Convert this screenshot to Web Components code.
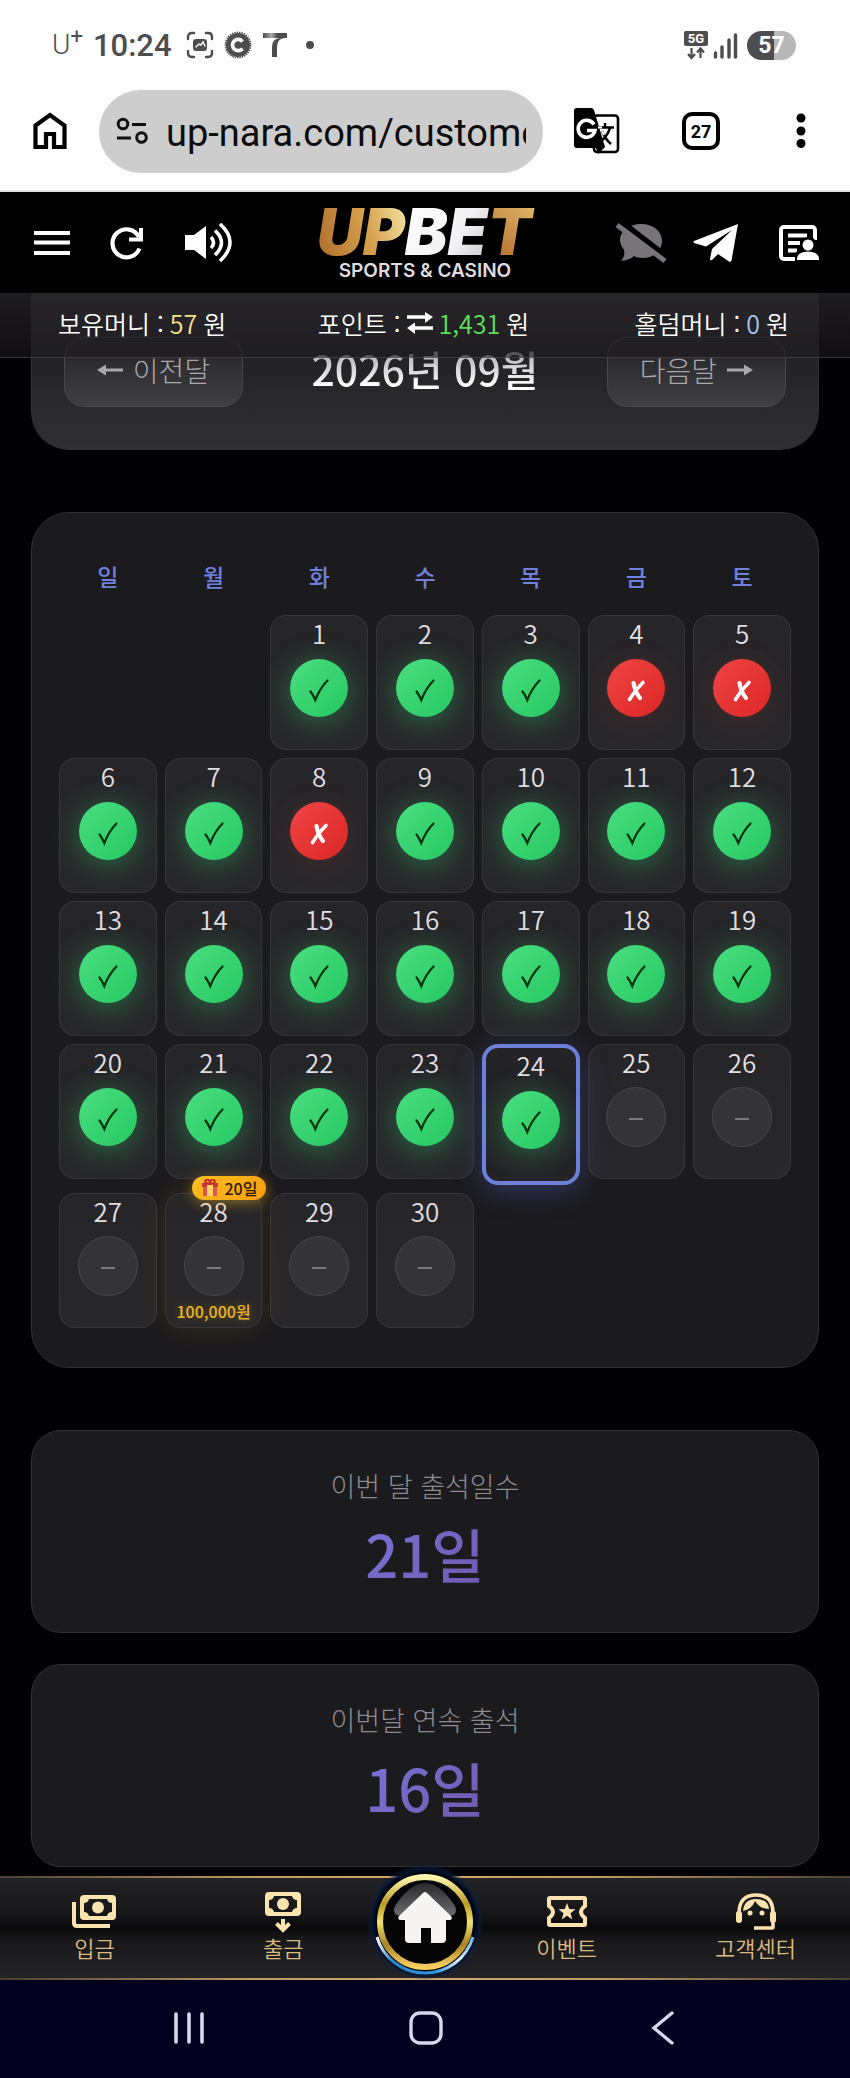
<!DOCTYPE html>
<html lang="ko">
<head>
<meta charset="UTF-8">
<meta name="viewport" content="width=device-width, initial-scale=1.0">
<title>UPBET 출석체크</title>
<style>
  :root {
    --font-kr: "Noto Sans CJK KR", "Noto Sans", sans-serif;
    --font-ui: Roboto, "Noto Sans CJK KR", sans-serif;
    --line: #323134;
    --card: #1b1a1d;
    --gold: #dcbb80;
    --accent: #6f81dc;
  }
  body {
    margin: 0;
    background: #020104;
    color: #fff;
    font-family: var(--font-kr);
  }
</style>
</head>
<body>
<attend-app></attend-app>

<script>
// 아이콘 모음
const ICONS = {
  capture: `<svg width="28" height="28" viewBox="0 0 28 28" fill="none" stroke="#4d4d4f" stroke-width="2.4" stroke-linecap="round"><path d="M2 8V6q0-4 4-4h2M20 2h2q4 0 4 4v2M26 20v2q0 4-4 4h-2M8 26H6q-4 0-4-4v-2"/><rect x="7" y="8" width="14" height="12" rx="3" fill="#4d4d4f" stroke="none"/><path d="M10 16l3-3 2 1 2-3 2 4" stroke="#fdfdfd" stroke-width="1.4"/></svg>`,
  coin: `<svg width="28" height="28" viewBox="0 0 28 28" fill="none"><circle cx="14" cy="14" r="12" fill="#4d4d4f"/><circle cx="14" cy="14" r="12.6" stroke="#4d4d4f" stroke-width="1.6" stroke-dasharray="1.4 1"/><path d="M18.500 10.500a5.600 5.600 0 1 0 0 7" stroke="#fdfdfd" stroke-width="3.600"/></svg>`,
  tmark: `<svg width="26" height="26" viewBox="0 0 26 26"><defs><linearGradient id="t"><stop offset="0" stop-color="#4d4d4f"/><stop offset=".35" stop-color="#aaa"/><stop offset=".6" stop-color="#4d4d4f"/></linearGradient></defs><path d="M1 1h24v5H1z" fill="url(#t)"/><path d="M10 25V15q0-9 9-9h3q-7 1-7 9v10z" fill="#4d4d4f"/></svg>`,
  network: `<svg width="26" height="30" viewBox="0 0 26 30"><rect x="1" y="1" width="24" height="15" rx="2" fill="#4d4d4f"/><text x="13" y="13" font-size="13" font-weight="700" font-family="Roboto" text-anchor="middle" fill="#fff">5G</text><path d="M8.500 18v9M5 24l3.500 4 3.500-4M17.500 28v-9M14 22.500l3.500-4 3.500 4" fill="none" stroke="#4d4d4f" stroke-width="2.200"/></svg>`,
  signal: `<svg width="25" height="28" viewBox="0 0 25 28" stroke="#4d4d4f" stroke-width="3.400" stroke-linecap="round"><path d="M2.500 22v4M9 16v10M16 9v17M22.500 4v22"/></svg>`,
  home: `<svg width="34" height="38" viewBox="0 0 34 38"><path d="M2.500 13.500L17 3l14.500 10.500V35H21V22h-8v13H2.500z" fill="none" stroke="#000" stroke-width="4.200"/></svg>`,
  tune: `<svg width="32" height="28" viewBox="0 0 32 28" fill="none" stroke="#111" stroke-width="3"><circle cx="7" cy="7" r="4.800"/><path d="M16 7.500h14M1 21h14"/><circle cx="25.500" cy="20.500" r="4.800"/></svg>`,
  translate: `<svg width="46" height="46" viewBox="0 0 46 46"><rect x="20" y="7.500" width="24" height="36.500" rx="3" fill="#fdfdfd" stroke="#000" stroke-width="2.600"/><path d="M3 0h14q2 0 3 2l11 37-7 7-2-6H3q-3 0-3-3V3q0-3 3-3z" fill="#000"/><path d="M20 16.500a8.500 8.500 0 1 0 1 6h-8" fill="none" stroke="#fff" stroke-width="3.600"/><path d="M31 15v4" stroke="#000" stroke-width="2.400"/><path d="M24 19.500h16M36 20q-3 9-10 14M28 23q3 8 9 13" fill="none" stroke="#000" stroke-width="2.400"/><path d="M24 19.500h4M28 23l2 4" stroke="#fff" stroke-width="2"/></svg>`,
  more: `<svg width="10" height="36" viewBox="0 0 10 36"><circle cx="5" cy="5" r="4.500"/><circle cx="5" cy="18" r="4.500"/><circle cx="5" cy="30.500" r="4.500"/></svg>`,
  menu: `<svg width="36" height="40" viewBox="0 0 36 40" stroke="#fff" stroke-width="3.800"><path d="M0 10h36M0 19.500h36M0 30h36"/></svg>`,
  refresh: `<svg width="34" height="40" viewBox="0 0 34 40" fill="none" stroke="#fff" stroke-width="4.200"><path d="M29 14A14 14 0 1 0 29.500 25.500"/><path d="M31 5v11.500H19" stroke-width="4"/></svg>`,
  speaker: `<svg width="48" height="40" viewBox="0 0 48 40"><path d="M1 12h9L22 3v33L10 27H1z" fill="#fff"/><g fill="none" stroke="#fff" stroke-width="3.600"><path d="M27 14q5 6 0 11M31 7.500q13 12 0 24.500M36 1q20 18 0 37"/></g></svg>`,
  chatOff: `<svg width="52" height="42" viewBox="0 0 52 42"><path d="M26 2c12 0 21 7 21 17 0 9-8 17-19 17-4 0-7-1-9-2-3 3-7 4-13 5 3-4 4-7 3-11-2-3-4-6-4-10C5 9 14 2 26 2z" fill="#77757a"/><path d="M4-2l52 40" stroke="#000" stroke-width="6"/><path d="M2 3l48 36" stroke="#77757a" stroke-width="5"/></svg>`,
  plane: `<svg width="46" height="42" viewBox="0 0 46 42" fill="#fff"><path d="M45 2L1 19q-1 1 0 2l12 3.500L39 8 19 27l-2 10q0 2 2 1l6-6 11 7.500q2 1 2.500-1z"/></svg>`,
  report: `<svg width="40" height="38" viewBox="0 0 40 38"><rect x="2" y="3" width="34" height="32" rx="3" fill="none" stroke="#fff" stroke-width="4"/><path d="M9 11.500h19M9 19h12M9 26.500h9" stroke="#fff" stroke-width="3.800"/><path d="M16 38V30q3-5 7-6-2-11 7-11 4 0 6 3h4v22z" fill="#000"/><circle cx="29" cy="21" r="5.500" fill="#fff"/><path d="M18 36v-2q1-6 11-6.500 10 .5 11 6.500v2z" fill="#fff"/></svg>`,
  swap: `<svg width="26" height="22" viewBox="0 0 26 22"><path d="M0 5h19M26 16H7" stroke="#fff" stroke-width="3.400"/><path d="M18 0l8 5-8 6zM8 10.500L0 16l8 6z" fill="#fff"/></svg>`,
  arrowL: `<svg width="26" height="12" viewBox="0 0 26 12" fill="#a9a7ab"><path d="M0 6l9-5.500v4h17v3H9v4z"/></svg>`,
  arrowR: `<svg width="26" height="12" viewBox="0 0 26 12" fill="#a9a7ab"><path d="M26 6l-9-5.500v4H0v3h17v4z"/></svg>`,
  done: `<svg width="58" height="58" viewBox="0 0 58 58"><path d="M20.500 32.500q3 4 4.800 8.500Q30 29 37.500 21.500" fill="none" stroke="#06330f" stroke-width="2.200" stroke-linecap="round"/></svg>`,
  miss: `<svg width="58" height="58" viewBox="0 0 58 58" fill="none" stroke="#fff" stroke-linecap="round"><path d="M22.500 40.500Q28 31 36 23.500" stroke-width="3.600"/><path d="M26.500 24Q28 33 33 39" stroke-width="4.200"/></svg>`,
  wait: `<svg width="58" height="58" viewBox="0 0 58 58"><path d="M22 31h14" stroke="#7a787c" stroke-width="2"/></svg>`,
  gift: `<svg width="18" height="18" viewBox="0 0 18 18"><path d="M2 7h14v10H2z" fill="#e2574c"/><path d="M1 4h16v4H1z" fill="#c93a35"/><path d="M6 4h6v13H6z" fill="#ffcf6b"/><path d="M9 5C5 5 3 3 5 1s4 1 4 4c0-3 2-6 4-4s0 4-4 4z" fill="none" stroke="#c2272d" stroke-width="2"/></svg>`,
  deposit: `<svg width="46" height="44" viewBox="0 0 46 44" fill="#fbe3b0"><path fill-rule="evenodd" d="M13 6h28q4 0 4 4v17q0 4-4 4H13q-4 0-4-4V10q0-4 4-4zm5 4q-1 4-5 4v9q4 0 5 4h18q1-4 5-4v-9q-4 0-5-4z"/><circle cx="27" cy="18.500" r="6"/><path d="M3 13v21q0 3 3 3h33" fill="none" stroke="#fbe3b0" stroke-width="4"/></svg>`,
  withdraw: `<svg width="38" height="44" viewBox="0 0 38 44" fill="#fbe3b0"><path fill-rule="evenodd" d="M5 3h28q4 0 4 4v16q0 4-4 4H5q-4 0-4-4V7q0-4 4-4zm5 4q-1 4-5 4v8q4 0 5 4h18q1-4 5-4v-8q-4 0-5-4z"/><circle cx="19" cy="15" r="6"/><path d="M19 30v11M12.500 34.500L19 41l6.500-6.500" fill="none" stroke="#fbe3b0" stroke-width="4"/></svg>`,
  ticket: `<svg width="42" height="44" viewBox="0 0 42 44"><path d="M4 9h34q1 0 1 1v7q-8 6 0 12v6q0 1-1 1H4q-1 0-1-1v-6q8-6 0-12v-7q0-1 1-1z" fill="none" stroke="#fbe3b0" stroke-width="4"/><path d="M21 14l2.200 6 6.300.2-5 4 1.800 6.200-5.300-3.600-5.300 3.600 1.800-6.200-5-4 6.300-.2z" fill="#fbe3b0"/></svg>`,
  support: `<svg width="42" height="44" viewBox="0 0 42 44"><path d="M4 24C4 12 10 6 21 6s17 6 17 18v14q0 1-1 1H19" fill="none" stroke="#fbe3b0" stroke-width="3.600"/><rect x="1" y="22" width="6" height="12" rx="3" fill="#fbe3b0"/><rect x="35" y="22" width="6" height="12" rx="3" fill="#fbe3b0"/><path d="M8 22Q9 10 21 10t13 10q-9 0-14-8-3 8-12 10z" fill="#fbe3b0"/><circle cx="15" cy="24" r="2.500" fill="#fbe3b0"/><circle cx="27" cy="24" r="2.500" fill="#fbe3b0"/></svg>`,
  recents: `<svg width="34" height="34" viewBox="0 0 34 34" stroke="#d9d6ee" stroke-width="3.600" stroke-linecap="round"><path d="M4 3v28M17 3v28M30 3v28"/></svg>`,
  square: `<svg width="34" height="34" viewBox="0 0 34 34"><rect x="2" y="2" width="30" height="30" rx="9" fill="none" stroke="#d9d6ee" stroke-width="3.400"/></svg>`,
  back: `<svg width="34" height="34" viewBox="0 0 34 34"><path d="M26 2L8 17l18 15" fill="none" stroke="#d9d6ee" stroke-width="3.400" stroke-linecap="round"/></svg>`,
};

const RESET = `
  *{
    box-sizing:border-box;
  }
  svg{
    display:block;
    flex:none;
  }
  button{
    display:flex;
    align-items:center;
    justify-content:center;
    margin:0;
    padding:0;
    border:none;
    background:none;
    color:inherit;
    font:inherit;
    cursor:pointer;
  }
`;

// 휴대폰 상태 표시줄
class StatusBar extends HTMLElement {
  constructor() {
    super();
    this.attachShadow({ mode: "open" });
  }

  connectedCallback() {
    this.shadowRoot.innerHTML = /*HTML*/ `
      <style>
        ${RESET}
        :host{
          display:flex;
          align-items:center;
          justify-content:space-between;
          height:90px;
          padding:0 54px 0 52px;
          background:#fdfdfd;
          color:#4d4d4f;
          font-family:var(--font-ui);
        }
        .side{
          display:flex;
          align-items:center;
          gap:10px;
        }
        .right{
          gap:4px;
        }
        .carrier{
          font-size:28px;
          font-weight:300;
          line-height:32px;
        }
        .carrier sup{
          font-size:22px;
          font-weight:400;
          line-height:0;
        }
        .time{
          font-size:31px;
          font-weight:500;
          margin-right:4px;
        }
        .dot{
          width:8px;
          height:8px;
          margin-left:8px;
          border-radius:50%;
          background:#4d4d4f;
        }
        .battery{
          width:49px;
          margin-left:5px;
          border-radius:15px;
          background:linear-gradient(90deg, #4d4d4f 56%, #b8b8b8 56%);
          color:#fff;
          font-size:23px;
          font-weight:700;
          line-height:29px;
          text-align:center;
        }
      </style>
      <div class="side">
        <span class="carrier">U<sup>+</sup></span>
        <span class="time">10:24</span>
        ${ICONS.capture}${ICONS.coin}${ICONS.tmark}
        <span class="dot"></span>
      </div>
      <div class="side right">
        ${ICONS.network}${ICONS.signal}
        <span class="battery">57</span>
      </div>
    `;
  }
}
customElements.define("status-bar", StatusBar);

// 브라우저 주소창
class BrowserBar extends HTMLElement {
  constructor() {
    super();
    this.attachShadow({ mode: "open" });
  }

  connectedCallback() {
    const url = this.getAttribute("url") || "";
    const tabs = this.getAttribute("tabs") || "1";

    this.shadowRoot.innerHTML = /*HTML*/ `
      <style>
        ${RESET}
        :host{
          display:flex;
          align-items:center;
          box-sizing:border-box;
          height:102px;
          padding:0 44px 18px 33px;
          border-bottom:2px solid #e3e3e6;
          background:#fdfdfd;
          color:#000;
          font-family:var(--font-ui);
        }
        .address{
          display:flex;
          align-items:center;
          flex:1;
          min-width:0;
          gap:18px;
          height:83px;
          margin:0 31px 0 32px;
          padding:0 17px;
          border-radius:42px;
          background:#cdcdcd;
        }
        input{
          flex:1;
          min-width:0;
          padding:4px 0 0;
          border:none;
          outline:none;
          background:none;
          color:#0c0c0c;
          font-family:inherit;
          font-size:38px;
          line-height:48px;
        }
        .tabs{
          width:38px;
          height:38px;
          margin:0 76px 0 62px;
          border:4px solid #000;
          border-radius:10px;
          font-size:18px;
          font-weight:700;
        }
      </style>
      <button aria-label="홈">${ICONS.home}</button>
      <label class="address">
        ${ICONS.tune}
        <input type="text" aria-label="주소" value="${url}">
      </label>
      <button aria-label="번역">${ICONS.translate}</button>
      <button class="tabs" aria-label="탭">${tabs}</button>
      <button aria-label="더보기">${ICONS.more}</button>
    `;
  }
}
customElements.define("browser-bar", BrowserBar);

// 사이트 상단 (메뉴 + 로고)
class SiteHeader extends HTMLElement {
  constructor() {
    super();
    this.attachShadow({ mode: "open" });
  }

  connectedCallback() {
    this.shadowRoot.innerHTML = /*HTML*/ `
      <style>
        ${RESET}
        :host{
          display:block;
          position:relative;
          z-index:2;
        }
        .toolbar{
          display:grid;
          grid-template-columns:1fr auto 1fr;
          align-items:center;
          height:101px;
          padding:0 31px 0 34px;
          background:#000;
        }
        .group{
          display:flex;
          align-items:center;
          gap:40px;
        }
        .group.end{
          justify-content:flex-end;
          gap:26px;
        }
        .group.end button:last-child{
          margin-left:14px;
        }
      </style>
      <div class="toolbar">
        <div class="group">
          <button aria-label="메뉴">${ICONS.menu}</button>
          <button aria-label="새로고침">${ICONS.refresh}</button>
          <button aria-label="소리">${ICONS.speaker}</button>
        </div>
        <svg width="240" height="101" viewBox="0 0 240 101" role="img" aria-label="UPBET">
          <defs>
            <linearGradient id="gold" gradientUnits="userSpaceOnUse" x1="4" y1="60" x2="110" y2="30">
              <stop offset="0" stop-color="#a9692a"/>
              <stop offset=".55" stop-color="#d6a04c"/>
              <stop offset="1" stop-color="#f6ecb0"/>
            </linearGradient>
            <linearGradient id="silver" gradientUnits="userSpaceOnUse" x1="100" y1="10" x2="190" y2="60">
              <stop offset="0" stop-color="#fff"/>
              <stop offset=".6" stop-color="#f2f1f3"/>
              <stop offset="1" stop-color="#c4c3c6"/>
            </linearGradient>
            <linearGradient id="bronze" gradientUnits="userSpaceOnUse" x1="195" y1="60" x2="230" y2="18">
              <stop offset="0" stop-color="#b87a35"/>
              <stop offset="1" stop-color="#e0b469"/>
            </linearGradient>
          </defs>
          <text x="117" y="63" text-anchor="middle" font-family="Inter" font-size="64" font-weight="900" font-style="italic"><tspan fill="url(#gold)">UP</tspan><tspan fill="url(#silver)">BE</tspan><tspan fill="url(#bronze)">T</tspan></text>
          <text x="118" y="85" text-anchor="middle" font-family="Inter" font-size="19" font-weight="600" fill="#dedcdf">SPORTS &amp; CASINO</text>
        </svg>
        <div class="group end">
          <button aria-label="채팅 끄기">${ICONS.chatOff}</button>
          <button aria-label="텔레그램">${ICONS.plane}</button>
          <button aria-label="내역">${ICONS.report}</button>
        </div>
      </div>
      <slot></slot>
    `;
  }
}
customElements.define("site-header", SiteHeader);

// 보유머니 표시줄, 본문 위에 겹쳐진다
class BalanceBar extends HTMLElement {
  constructor() {
    super();
    this.attachShadow({ mode: "open" });
  }

  connectedCallback() {
    this.shadowRoot.innerHTML = /*HTML*/ `
      <style>
        ${RESET}
        :host{
          display:grid;
          grid-template-columns:1fr auto 1fr;
          align-items:center;
          box-sizing:border-box;
          height:65px;
          margin-bottom:-65px;
          padding:0 61px 4px 58px;
          border-bottom:1px solid rgba(255, 255, 255, .12);
          background:linear-gradient(180deg, rgba(36, 34, 37, .8), rgba(26, 24, 28, .6));
          font-size:25px;
          font-weight:350;
          line-height:36px;
        }
        span{
          display:flex;
          align-items:center;
          gap:6px;
        }
        span:last-child{
          justify-content:flex-end;
        }
        b{
          font-weight:inherit;
        }
        .money{ color:#f5e08e; }
        .point{ color:#5fe05c; }
        .holdem{ color:#a9c1f2; }
      </style>
      <span>보유머니 : <b class="money">57</b> 원</span>
      <span>포인트 : ${ICONS.swap} <b class="point">1,431</b> 원</span>
      <span>홀덤머니 : <b class="holdem">0</b> 원</span>
    `;
  }
}
customElements.define("balance-bar", BalanceBar);

// 월 이동
class MonthNav extends HTMLElement {
  constructor() {
    super();
    this.attachShadow({ mode: "open" });
  }

  connectedCallback() {
    this.shadowRoot.innerHTML = /*HTML*/ `
      <style>
        ${RESET}
        :host{
          display:flex;
          align-items:center;
          justify-content:space-between;
          box-sizing:border-box;
          padding:44px 32px 42px;
          border:1px solid var(--line);
          border-top:none;
          border-radius:0 0 38px 38px;
          background:linear-gradient(180deg, #343336, #232225 42%, #302f32);
        }
        button{
          gap:10px;
          width:179px;
          height:70px;
          padding-bottom:4px;
          border:1px solid #48474a;
          border-radius:20px;
          background:linear-gradient(180deg, #2b2a2d 30%, #403f42);
          color:#a9a7ab;
          font-size:28px;
          font-weight:300;
        }
        h2{
          margin:0 0 8px;
          background:linear-gradient(180deg, #aaa8ac 20%, #fff 80%);
          background-clip:text;
          -webkit-background-clip:text;
          color:transparent;
          font-size:41px;
          font-weight:500;
          line-height:60px;
        }
      </style>
      <button>${ICONS.arrowL}이전달</button>
      <h2><slot></slot></h2>
      <button>다음달${ICONS.arrowR}</button>
    `;
  }
}
customElements.define("month-nav", MonthNav);

// 날짜 한 칸. state: done | miss | wait
class DayCell extends HTMLElement {
  constructor() {
    super();
    this.attachShadow({ mode: "open" });
  }

  connectedCallback() {
    const day = this.getAttribute("day");
    const state = this.getAttribute("state") || "wait";
    const badge = this.getAttribute("badge");
    const reward = this.getAttribute("reward") || "";

    this.shadowRoot.innerHTML = /*HTML*/ `
      <style>
        ${RESET}
        :host{
          display:flex;
          flex-direction:column;
          align-items:center;
          position:relative;
          box-sizing:border-box;
          padding:1px 0 3px;
          border:1px solid rgba(255, 255, 255, .08);
          border-radius:16px;
          background:linear-gradient(180deg, rgba(255, 255, 255, .05), rgba(255, 255, 255, .06));
        }
        :host([today]){
          border:4px solid #6c80da;
          background:#242326;
          box-shadow:0 6px 28px rgba(90, 112, 220, .35);
        }
        :host([badge]){
          box-shadow:0 0 28px rgba(251, 191, 36, .12);
        }
        .day{
          color:#e0dfe1;
          font-size:26px;
          font-weight:350;
          line-height:32px;
        }
        .mark{
          display:flex;
          align-items:center;
          justify-content:center;
          width:58px;
          height:58px;
          margin:10px 0 1px;
          border-radius:50%;
        }
        .done{
          background:linear-gradient(135deg, #4ade80, #26c862);
          box-shadow:0 4px 30px rgba(46, 204, 113, .45);
        }
        .miss{
          background:linear-gradient(135deg, #ef4444, #dc2626);
          box-shadow:0 4px 28px rgba(239, 68, 68, .16);
        }
        .wait{
          width:60px;
          height:60px;
          margin:9px 0 0;
          border:1px solid #48474a;
          background:#343336;
        }
        .reward{
          height:28px;
          padding-top:2px;
          color:#eab526;
          font-size:16px;
          font-weight:500;
          line-height:26px;
          text-shadow:0 0 8px rgba(251, 191, 36, .4);
        }
        .badge{
          display:flex;
          align-items:center;
          gap:5px;
          position:absolute;
          top:-18px;
          right:-5px;
          height:24px;
          padding:0 9px;
          border-radius:12px;
          background:linear-gradient(135deg, #fbbf24, #f59e0b);
          box-shadow:0 3px 14px rgba(251, 191, 36, .45);
          color:#2a1a05;
          font-size:16px;
          font-weight:500;
          line-height:24px;
        }
      </style>
      ${badge ? `<div class="badge">${ICONS.gift}${badge}</div>` : ""}
      <div class="day">${day}</div>
      <div class="mark ${state}">${ICONS[state]}</div>
      <div class="reward">${reward}</div>
    `;
  }
}
customElements.define("day-cell", DayCell);

// 출석 달력
class AttendCalendar extends HTMLElement {
  constructor() {
    super();
    this.attachShadow({ mode: "open" });
  }

  connectedCallback() {
    const start = Number(this.getAttribute("start"));
    const days = Number(this.getAttribute("days"));
    const today = Number(this.getAttribute("today"));
    const missed = this.getAttribute("missed").split(",").map(Number);

    let rows = "";
    for (let first = 1 - start; first <= days; first += 7) {
      rows += "<tr>";
      for (let d = first; d < first + 7; d++) {
        if (d < 1 || d > days) {
          rows += "<td></td>";
          continue;
        }
        const state = d > today ? "wait" : missed.includes(d) ? "miss" : "done";
        const extra = d === 28 ? 'badge="20일" reward="100,000원"' : "";
        rows += `<td><day-cell day="${d}" state="${state}" ${d === today ? "today" : ""} ${extra}></day-cell></td>`;
      }
      rows += "</tr>";
    }

    this.shadowRoot.innerHTML = /*HTML*/ `
      <style>
        ${RESET}
        :host{
          display:block;
          box-sizing:border-box;
          padding:28px 19px 31px;
          border:1px solid var(--line);
          border-radius:38px;
          background:var(--card);
        }
        table{
          width:100%;
          table-layout:fixed;
          border-collapse:separate;
          border-spacing:8px;
        }
        th{
          height:58px;
          padding:0 0 5px;
          color:var(--accent);
          font-size:23px;
          font-weight:500;
          line-height:32px;
        }
        td{
          padding:0;
          vertical-align:top;
        }
      </style>
      <table>
        <thead>
          <tr>${[..."일월화수목금토"].map((w) => `<th scope="col">${w}</th>`).join("")}</tr>
        </thead>
        <tbody>${rows}</tbody>
      </table>
    `;
  }
}
customElements.define("attend-calendar", AttendCalendar);

// 통계 카드
class StatCard extends HTMLElement {
  constructor() {
    super();
    this.attachShadow({ mode: "open" });
  }

  connectedCallback() {
    const label = this.getAttribute("label") || "";

    this.shadowRoot.innerHTML = /*HTML*/ `
      <style>
        ${RESET}
        :host{
          display:flex;
          flex-direction:column;
          align-items:center;
          gap:14px;
          box-sizing:border-box;
          padding:37px 28px 44px;
          border:1px solid var(--line);
          border-radius:30px;
          background:var(--card);
        }
        .label{
          color:#8d8b8f;
          font-size:27px;
          font-weight:300;
          line-height:36px;
        }
        .value{
          background:linear-gradient(135deg, #7a74d8, #6f58ae);
          background-clip:text;
          -webkit-background-clip:text;
          color:transparent;
          font-size:58px;
          font-weight:500;
          line-height:70px;
        }
      </style>
      <div class="label">${label}</div>
      <div class="value"><slot></slot></div>
    `;
  }
}
customElements.define("stat-card", StatCard);

// 하단 메뉴
class BottomMenu extends HTMLElement {
  constructor() {
    super();
    this.attachShadow({ mode: "open" });
  }

  item(icon, text) {
    return `<a href="#">${ICONS[icon]}<span>${text}</span></a>`;
  }

  connectedCallback() {
    this.shadowRoot.innerHTML = /*HTML*/ `
      <style>
        ${RESET}
        :host{
          display:block;
          position:relative;
          z-index:1;
          padding:2px 0;
          background:linear-gradient(90deg, #4a4034, #c59a60 30%, #d4a868 50%, #c59a60 70%, #4a4034);
        }
        nav{
          display:grid;
          grid-template-columns:2fr 2fr minmax(0, 1fr) 2fr 2fr;
          background:linear-gradient(180deg, #232225, #171619 35%, #0a090a 50%, #19181a 62%, #232224);
        }
        a{
          display:flex;
          flex-direction:column;
          align-items:center;
          padding-top:11px;
          color:var(--gold);
          font-size:22px;
          font-weight:350;
          line-height:28px;
          text-decoration:none;
        }
        .home{
          flex-direction:row;
          justify-content:center;
          margin:-14px 0 -2px;
          padding:0;
        }
      </style>
      <nav>
        ${this.item("deposit", "입금")}
        ${this.item("withdraw", "출금")}
        <a class="home" href="#" aria-label="홈">
          <svg width="124" height="116" viewBox="0 0 124 116">
            <defs>
              <linearGradient id="ring" x1="0" y1="0" x2="0" y2="1">
                <stop offset="0" stop-color="#fdf6b0"/>
                <stop offset=".3" stop-color="#b99a24"/>
                <stop offset=".5" stop-color="#efe06e"/>
                <stop offset=".75" stop-color="#a98426"/>
                <stop offset="1" stop-color="#f6cf62"/>
              </linearGradient>
              <linearGradient id="gloss" x1="0" y1="0" x2="0" y2="1">
                <stop offset="0" stop-color="#2a2a2c"/>
                <stop offset="1" stop-color="#6c6b70"/>
              </linearGradient>
              <linearGradient id="arc" x1="0" y1="0" x2="1" y2="0">
                <stop offset="0" stop-color="#fff"/>
                <stop offset=".15" stop-color="#2b86cc"/>
                <stop offset=".6" stop-color="#2f8fd6"/>
                <stop offset=".85" stop-color="#d8f1ff"/>
                <stop offset="1" stop-color="#7cb6ee"/>
              </linearGradient>
              <radialGradient id="halo">
                <stop offset=".82" stop-color="#000"/>
                <stop offset=".9" stop-color="#02102a"/>
                <stop offset="1" stop-color="#0a2a55" stop-opacity="0"/>
              </radialGradient>
            </defs>
            <circle cx="62" cy="58" r="58" fill="url(#halo)"/>
            <path d="M14 73A50 50 0 0 0 110 73" fill="none" stroke="url(#arc)" stroke-width="3"/>
            <circle cx="62" cy="58" r="45" fill="#060506" stroke="url(#ring)" stroke-width="6"/>
            <path d="M32 42Q62-4 92 42 96 52 84 52H40Q28 52 32 42z" fill="url(#gloss)"/>
            <path d="M36 52L60 29q2-2 4 0l24 23q2 3-1 4h-4v19q0 4-4 4H68V64H58v15H46q-4 0-4-4V56h-5q-3-1-1-4z" fill="#f6f5f3"/>
          </svg>
        </a>
        ${this.item("ticket", "이벤트")}
        ${this.item("support", "고객센터")}
      </nav>
    `;
  }
}
customElements.define("bottom-menu", BottomMenu);

// 안드로이드 내비게이션
class SystemNav extends HTMLElement {
  constructor() {
    super();
    this.attachShadow({ mode: "open" });
  }

  connectedCallback() {
    this.shadowRoot.innerHTML = /*HTML*/ `
      <style>
        ${RESET}
        :host{
          display:grid;
          grid-template-columns:repeat(3, 1fr);
          height:99px;
          padding:0 68px 4px 70px;
          box-sizing:border-box;
          background:#01001e;
        }
      </style>
      <button aria-label="최근 앱">${ICONS.recents}</button>
      <button aria-label="홈">${ICONS.square}</button>
      <button aria-label="뒤로">${ICONS.back}</button>
    `;
  }
}
customElements.define("system-nav", SystemNav);

class AttendApp extends HTMLElement {
  constructor() {
    super();
    this.attachShadow({ mode: "open" });
  }

  connectedCallback() {
    this.shadowRoot.innerHTML = /*HTML*/ `
      <style>
        :host{
          display:flex;
          flex-direction:column;
          min-height:100vh;
        }
        main{
          display:flex;
          flex-direction:column;
          flex:1;
          gap:62px;
          padding:0 31px 9px;
        }
        .stats{
          display:flex;
          flex-direction:column;
          gap:31px;
        }
      </style>
      <status-bar></status-bar>
      <browser-bar url="up-nara.com/custome" tabs="27"></browser-bar>
      <site-header><balance-bar></balance-bar></site-header>
      <main>
        <month-nav>2026년 09월</month-nav>
        <attend-calendar start="2" days="30" today="24" missed="4,5,8"></attend-calendar>
        <div class="stats">
          <stat-card label="이번 달 출석일수">21일</stat-card>
          <stat-card label="이번달 연속 출석">16일</stat-card>
        </div>
      </main>
      <bottom-menu></bottom-menu>
      <system-nav></system-nav>
    `;
  }
}
customElements.define("attend-app", AttendApp);
</script>
</body>
</html>
